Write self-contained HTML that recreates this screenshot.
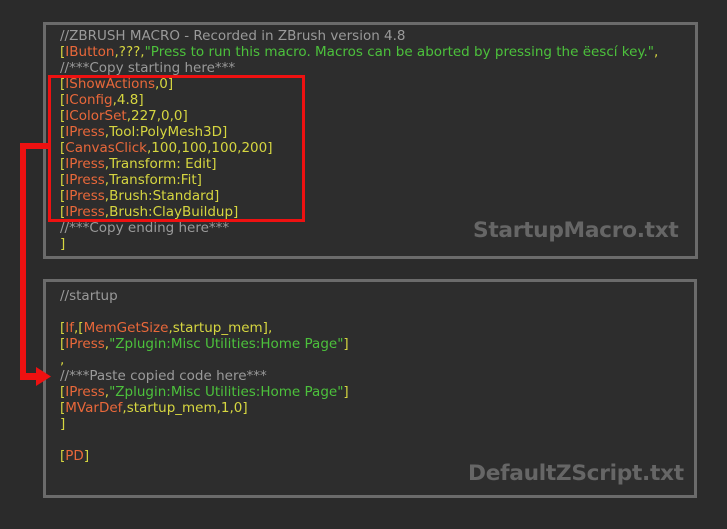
<!DOCTYPE html>
<html><head><meta charset="utf-8"><style>
body{margin:0;width:727px;height:529px;background:#2b2b2b;overflow:hidden;position:relative;font-family:"DejaVu Sans",Verdana,sans-serif;}
.p{position:absolute;border:3px solid #6b6b6b;background:#2d2d2d;box-sizing:border-box;}
.l{position:absolute;left:60px;font-size:13.5px;line-height:16px;white-space:pre;color:#d6d640;}
.c{color:#9a9a9a}.o{color:#e9683a}.g{color:#4cc13c}.y{color:#d6d640}
.t{position:absolute;font-family:"DejaVu Sans",Verdana,sans-serif;font-weight:bold;font-size:21.7px;color:#666;letter-spacing:-0.3px}
.r{position:absolute;background:#ee1111}
</style></head><body>
<div class="p" style="left:43px;top:22px;width:655px;height:237px"></div>
<div class="p" style="left:43px;top:279px;width:654px;height:219px"></div>

<div class="l c" style="top:28px">//ZBRUSH MACRO - Recorded in ZBrush version 4.8</div>
<div class="l" style="top:44px">[<span class="o">IButton</span>,???,<span class="g">"Press to run this macro. Macros can be aborted by pressing the ëescí key."</span>,</div>
<div class="l c" style="top:60px">//***Copy starting here***</div>
<div class="l" style="top:76px">[<span class="o">IShowActions</span>,0]</div>
<div class="l" style="top:92px">[<span class="o">IConfig</span>,4.8]</div>
<div class="l" style="top:108px">[<span class="o">IColorSet</span>,227,0,0]</div>
<div class="l" style="top:124px">[<span class="o">IPress</span>,Tool:PolyMesh3D]</div>
<div class="l" style="top:140px">[<span class="o">CanvasClick</span>,100,100,100,200]</div>
<div class="l" style="top:156px">[<span class="o">IPress</span>,Transform: Edit]</div>
<div class="l" style="top:172px">[<span class="o">IPress</span>,Transform:Fit]</div>
<div class="l" style="top:188px">[<span class="o">IPress</span>,Brush:Standard]</div>
<div class="l" style="top:204px">[<span class="o">IPress</span>,Brush:ClayBuildup]</div>
<div class="l c" style="top:220px">//***Copy ending here***</div>
<div class="l" style="top:236px">]</div>
<div class="t" style="left:473px;top:218px">StartupMacro.txt</div>

<div class="l c" style="top:288px">//startup</div>
<div class="l" style="top:320px">[<span class="o">If</span>,[<span class="o">MemGetSize</span>,startup_mem],</div>
<div class="l" style="top:336px">[<span class="o">IPress</span>,<span class="g">"Zplugin:Misc Utilities:Home Page"</span>]</div>
<div class="l" style="top:352px">,</div>
<div class="l c" style="top:368px">//***Paste copied code here***</div>
<div class="l" style="top:384px">[<span class="o">IPress</span>,<span class="g">"Zplugin:Misc Utilities:Home Page"</span>]</div>
<div class="l" style="top:400px">[<span class="o">MVarDef</span>,startup_mem,1,0]</div>
<div class="l" style="top:416px">]</div>
<div class="l" style="top:448px">[<span class="o">PD</span>]</div>
<div class="t" style="left:468px;top:461px">DefaultZScript.txt</div>

<div style="position:absolute;left:48px;top:75px;width:257px;height:147px;border:3px solid #ee1111;box-sizing:border-box"></div>
<div class="r" style="left:20px;top:143px;width:29px;height:6px"></div>
<div class="r" style="left:20px;top:143px;width:6px;height:237px"></div>
<div class="r" style="left:20px;top:373px;width:18px;height:7px"></div>
<svg style="position:absolute;left:36px;top:367px" width="16" height="19"><polygon points="0,0 15,9.5 0,19" fill="#ee1111"/></svg>
</body></html>
